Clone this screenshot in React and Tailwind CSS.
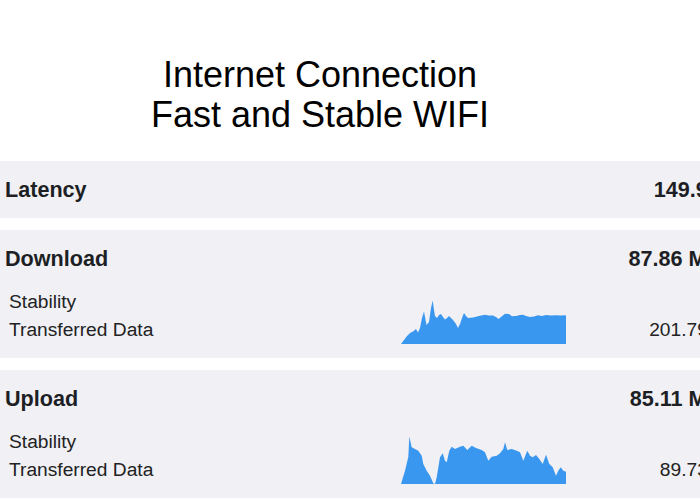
const downloadPath =
  "M0,50 L3,46 L6,42 L9,39 L12,37.5 L15,35 L17,38.5 L19,34 L21,24 L23,17.5 L25.5,31 L28,28 L30,14 L31.7,6.5 L33,16 L34,22 L36,24 L38,21 L40,20 L42,23 L44,25.5 L46,24 L48,22 L50,24 L52,26 L55,30 L57,34 L59,30 L61,24 L63,19 L65,22 L67,24 L72,23.5 L76,22.5 L80,21.5 L84,20.7 L88,21.5 L92,21.5 L95,23 L97.5,25 L100,23 L104,19.7 L108,20 L111,22.3 L115,22 L119,21 L122,20.7 L125,22 L129,23 L133,22.5 L137,21.3 L141,22 L145,21 L150,21.5 L155,21.2 L160,21.5 L165,21.3 L165,50 Z";

const uploadPath =
  "M0,50 L4,36.7 L7.3,23 L8.3,2.7 L10.7,13.3 L14,15 L17.3,16.7 L20.7,21.7 L22.3,30 L25.7,36.7 L29,41.7 L32.3,49.3 L34,50 L35.7,43.3 L39,23.3 L41.7,19.3 L44,26.7 L45.7,28.3 L48.3,16.7 L50.7,12.7 L54,15 L59,12.7 L62.3,11.7 L66.3,16 L70.7,11.7 L75,14 L80.7,16 L84,18.3 L87.3,26.7 L90.7,22.7 L95.7,21.7 L99,19.3 L102.3,15 L104,8.3 L106.3,16 L110.7,15 L115.7,16.7 L119,18.3 L122.3,26.7 L126.3,16.7 L129,21.7 L131.7,23.3 L135,21 L138.3,25 L141.7,30 L145,20.7 L148.3,30 L151.7,33.3 L155,41.7 L157.3,36.7 L159.7,33.3 L162.3,36.7 L165,37.7 L165,50 Z";

const Sparkline = ({ d }) => (
  <svg viewBox="0 0 165 50" preserveAspectRatio="none" className="w-[165px] h-[50px] block">
    <path d={d} fill="#3a97ef" />
  </svg>
);

const SpeedRow = ({ title, value, chart, transferred }) => (
  <div className="bg-[#f0f0f5] px-[5px] pt-4 pb-[14px]">
    <div className="flex justify-between text-[21.6px] leading-[25px] font-bold text-[#1d1f24]">
      <span>{title}</span>
      <span>{value}</span>
    </div>
    {/* Stability chart + transferred data */}
    <div className="mt-[17px] ml-[4px] mr-[3px] grid grid-cols-[392px_165px_1fr] grid-rows-[28px_28px] text-[19.2px] leading-[28px] text-[#222]">
      <span className="col-start-1 row-start-1">Stability</span>
      <div className="col-start-2 row-start-1 row-span-2 self-end">
        <Sparkline d={chart} />
      </div>
      <span className="col-start-1 row-start-2">Transferred Data</span>
      <span className="col-start-3 row-start-2 text-right">{transferred}</span>
    </div>
  </div>
);

const App = () => {
  return (
    <div className="w-[700px] h-[500px] overflow-hidden bg-white">
      <div className="w-[750px] font-['Liberation_Sans',Arial,sans-serif]">
        <h1 className="w-[640px] pt-[55px] text-center text-[36px] leading-[40px] font-normal text-black">
          Internet Connection
          <br />
          Fast and Stable WIFI
        </h1>

        <div className="mt-[26px] flex flex-col gap-3">
          {/* Latency */}
          <div className="bg-[#f0f0f5] px-[5px] py-4 flex justify-between text-[21.6px] leading-[25px] font-bold text-[#1d1f24]">
            <span>Latency</span>
            <span>149.9 ms</span>
          </div>

          <SpeedRow title="Download" value="87.86 Mbps" chart={downloadPath} transferred="201.79 MB" />
          <SpeedRow title="Upload" value="85.11 Mbps" chart={uploadPath} transferred="89.73 MB" />
        </div>
      </div>
    </div>
  );
};

export default App;
